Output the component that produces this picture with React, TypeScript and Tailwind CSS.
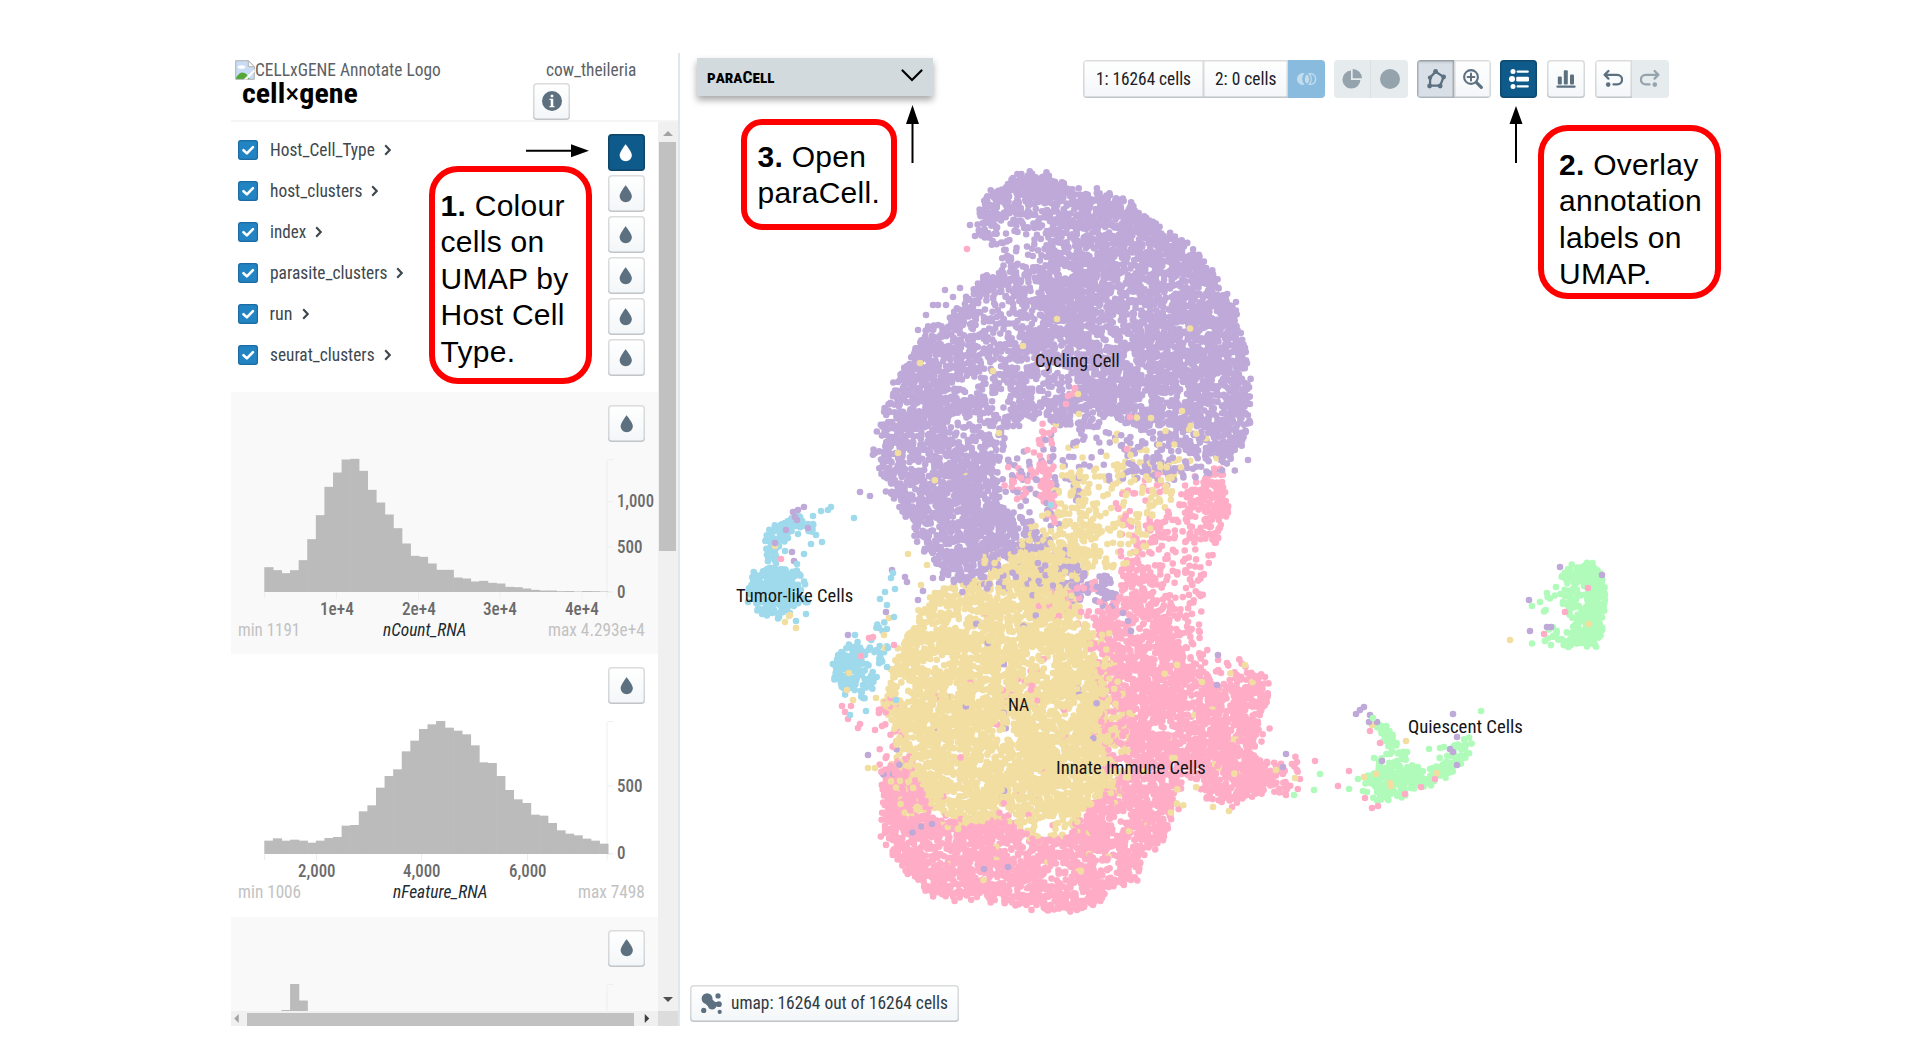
import React, { useLayoutEffect, useRef, useState } from "react";

/* ---------- condensed text ---------- */

type FitProps = { w: number; className?: string; children: React.ReactNode };

function Fit({ w, className = "", children }: FitProps) {
  const ref = useRef<HTMLSpanElement>(null);
  const [scale, setScale] = useState(0.89);
  useLayoutEffect(() => {
    if (ref.current) setScale(w / ref.current.offsetWidth);
  }, [w]);
  return (
    <span className={`block shrink-0 whitespace-nowrap leading-[20px] ${className}`} style={{ width: w }}>
      <span ref={ref} className="inline-block origin-left" style={{ transform: `scaleX(${scale})` }}>
        {children}
      </span>
    </span>
  );
}

/* ---------- icons ---------- */

const Drop = () => (
  <svg viewBox="0 0 16 16" className="size-[19.5px]" fill="currentColor">
    <path d="M7.88 1s-4.9 6.28-4.9 8.9c.01 2.82 2.34 5.1 4.99 5.1 2.65-.01 5.03-2.3 5.03-5.13C12.99 7.17 7.88 1 7.88 1z" />
  </svg>
);

const Info = () => (
  <svg viewBox="0 0 16 16" className="size-[20px]">
    <circle cx="8" cy="8" r="8" fill="#5c7080" />
    <path d="M7 3h2v2H7zM6 6.2h3V12h1v1H6v-1h1V7.2H6z" fill="#fff" />
  </svg>
);

const Venn = () => (
  <svg viewBox="0 0 20 14" className="h-[14px] w-[20px]">
    <path d="M7.5 1.2A6 6 0 1 0 7.5 12.8 8.6 8.6 0 0 1 7.5 1.2z" fill="currentColor" />
    <path d="M10 2.2a6.2 6.2 0 0 1 0 9.6 6.2 6.2 0 0 1 0-9.6z" fill="currentColor" />
    <path d="M12.3 1.7a5.4 5.4 0 1 1 0 10.6 8.6 8.6 0 0 0 0-10.6z" fill="none" stroke="currentColor" strokeWidth="1.4" />
  </svg>
);

const Pie = () => (
  <svg viewBox="0 0 20 20" className="size-[20px]" fill="currentColor">
    <path d="M9 1.6A9 9 0 1 0 18.4 11H9z" />
    <path d="M10.7 0v9.3H20A9.3 9.3 0 0 0 10.7 0z" />
  </svg>
);

const Polygon = () => (
  <svg viewBox="0 0 20 20" className="size-[20px]" stroke="currentColor" fill="currentColor">
    <path d="M9.6 2.6 17.6 8 14.2 16.6H4L4.2 8.4z" fill="none" strokeWidth="2.3" />
    <g stroke="none">
      <circle cx="9.6" cy="2.5" r="2.4" />
      <circle cx="17.6" cy="8" r="2.4" />
      <circle cx="14.2" cy="17" r="2.4" />
      <circle cx="3.6" cy="17" r="2.4" />
      <circle cx="4" cy="8.6" r="2.2" />
    </g>
  </svg>
);

const Zoom = () => (
  <svg viewBox="0 0 20 20" className="size-[20px]" fill="none" stroke="currentColor">
    <circle cx="8" cy="8" r="6.9" strokeWidth="2.1" />
    <path d="M8 4.6v6.8M4.6 8h6.8" strokeWidth="2" strokeLinecap="round" />
    <path d="M13.4 13.4 18.3 18.3" strokeWidth="3.2" strokeLinecap="round" />
  </svg>
);

const Labels = () => (
  <svg viewBox="0 0 20 20" className="size-[20px]" fill="currentColor">
    <circle cx="4" cy="2.6" r="2.5" />
    <circle cx="3" cy="10" r="3" />
    <circle cx="4" cy="17.4" r="2.5" />
    <rect x="7.6" y="1.4" width="12.2" height="2.4" rx="1" />
    <rect x="7.2" y="7.7" width="12.8" height="4.8" rx="1.2" />
    <rect x="7.6" y="16.2" width="12.2" height="2.4" rx="1" />
  </svg>
);

const Bars = () => (
  <svg viewBox="0 0 20 20" className="size-[20px]" fill="currentColor">
    <rect x="1.8" y="7.4" width="4" height="8" rx="1" />
    <rect x="7.8" y="1.2" width="4" height="14.2" rx="1" />
    <rect x="14" y="5.4" width="4" height="10" rx="1" />
    <rect x="0.4" y="16.4" width="19.2" height="2.4" rx="1" />
  </svg>
);

const Undo = () => (
  <svg viewBox="0 0 20 20" className="size-[20px]" fill="none" stroke="currentColor" strokeWidth="2.3" strokeLinecap="round" strokeLinejoin="round">
    <path d="M5.4 2 1.6 5.8l3.8 3.8M2 5.8h12.3a4.6 4.6 0 0 1 0 9.6h-3.8" />
    <circle cx="5.2" cy="15.6" r="2.3" fill="currentColor" stroke="none" />
  </svg>
);

const Cluster = () => (
  <svg viewBox="0 0 20 20" className="size-[21px]" fill="currentColor">
    <circle cx="5.8" cy="5.4" r="5.2" />
    <circle cx="10.6" cy="11.8" r="4" />
    <path d="M8.6 4.2 14 9v5l-5 1-5-5z" />
    <circle cx="17" cy="10.6" r="2.8" />
    <rect x="11" y="8.6" width="6" height="4" />
    <circle cx="16.2" cy="2.8" r="2.5" />
    <circle cx="2.6" cy="16.6" r="2.5" />
    <circle cx="17.8" cy="18" r="2" />
  </svg>
);

const BrokenImage = () => (
  <svg viewBox="0 0 20 20" className="size-[20px]">
    <path d="M.7.7h12.6l6 6v12.6H.7z" fill="#c9dcf5" stroke="#b0b0b0" />
    <path d="M13.3.7v6h6z" fill="#fff" stroke="#b0b0b0" />
    <ellipse cx="6.5" cy="7" rx="4" ry="1.8" fill="#fff" />
    <path d="M1.2 17.5C5 10.5 11 10.5 14.5 19H1.2z" fill="#53a839" />
    <path d="M8.5 19.6 19.6 9v2.8L12 19.6z" fill="#fff" />
  </svg>
);

/* ---------- buttons ---------- */

const FACE = "bg-gradient-to-b from-white to-[#f3f6f8] shadow-[inset_0_0_0_1.5px_rgba(16,22,26,0.15),inset_0_-1.5px_0_rgba(16,22,26,0.08)]";

function ColorButton({ active = false, children }: { active?: boolean; children?: React.ReactNode }) {
  return (
    <button
      className={`flex size-[37px] shrink-0 items-center justify-center rounded-[4px] ${
        active ? "bg-[#0e5a8a] text-white shadow-[inset_0_0_0_1.5px_rgba(16,22,26,0.3)]" : `${FACE} text-[#5c7080]`
      }`}
    >
      {children ?? <Drop />}
    </button>
  );
}

/* ---------- sidebar ---------- */

const CATEGORIES: [string, number][] = [
  ["Host_Cell_Type", 105],
  ["host_clusters", 92],
  ["index", 36],
  ["parasite_clusters", 117],
  ["run", 23],
  ["seurat_clusters", 105],
];

function CategoryRow({ name, w, active }: { name: string; w: number; active: boolean }) {
  return (
    <div className="flex h-[41.1px] items-start pl-[7px] pr-[13px]">
      <span className="mt-[6px] flex size-[20px] items-center justify-center rounded-[3px] bg-[#2384c3] shadow-[inset_0_0_0_1.2px_rgba(16,60,100,0.35)]">
        <svg viewBox="0 0 16 16" className="size-[18px]">
          <path d="M4 8.2 7 11l5.4-5.6" fill="none" stroke="#fff" strokeWidth="2.3" strokeLinecap="round" strokeLinejoin="round" />
        </svg>
      </span>
      <Fit w={w} className="ml-[11.5px] mt-[6px] text-[#3d474e]">{name}</Fit>
      <svg viewBox="0 0 7 12" className="ml-[9.5px] mt-[10px] h-[12px] w-[7px]">
        <path d="M1.2 1.3 5.7 6 1.2 10.7" fill="none" stroke="#3d474e" strokeWidth="2.1" />
      </svg>
      <span className="ml-auto">
        <ColorButton active={active} />
      </span>
    </div>
  );
}

type Tick = { at: number; label: string; w: number };
type HistProps = {
  name?: string;
  nameW?: number;
  nameX?: number;
  min?: string;
  minW?: number;
  max?: string;
  maxW?: number;
  bars: number[];
  xTicks?: Tick[];
  yTicks?: Tick[];
  shaded?: boolean;
};

function Histogram({ name, nameW = 0, nameX = 0, min, minW = 0, max, maxW = 0, bars, xTicks = [], yTicks = [], shaded }: HistProps) {
  return (
    <section className={`relative h-[262.3px] w-[427px] shrink-0 ${shaded ? "bg-[#f9f9f9]" : "bg-white"}`}>
      <div className="flex justify-end pr-[13px] pt-[13px]">
        <ColorButton />
      </div>
      <svg viewBox="0 0 427 262" className="absolute left-0 top-0 h-[262px] w-[427px]">
        <path d="M382 67.5h-4.5M376 67.5v139M376 200h6M33.5 200v6" stroke="#eeeeee" fill="none" />
        {yTicks.map((t) => (
          <path key={t.label} d={`M376 ${t.at}h6`} stroke="#eeeeee" />
        ))}
        {bars.map((h, i) => (
          <rect key={i} x={33.3 + i * 8.59} y={200 - h} width={9.2} height={h} fill="#bbbbbb" />
        ))}
        {xTicks.map((t) => (
          <path key={t.label} d={`M${t.at} 200v7`} stroke="#eeeeee" />
        ))}
      </svg>
      {xTicks.map((t) => (
        <div key={t.label} className="absolute top-[207px] font-medium text-[#6b6b6b]" style={{ left: t.at - t.w / 2 }}>
          <Fit w={t.w}>{t.label}</Fit>
        </div>
      ))}
      {yTicks.map((t) => (
        <div key={t.label} className="absolute left-[386px] font-medium text-[#6b6b6b]" style={{ top: t.at - 10.5 }}>
          <Fit w={t.w}>{t.label}</Fit>
        </div>
      ))}
      {name && (
        <div className="absolute left-[7px] right-[13px] top-[227.8px] flex justify-between">
          <Fit w={minW} className="text-[#c2c2c2]">{min}</Fit>
          <Fit w={maxW} className="text-[#c2c2c2]">{max}</Fit>
        </div>
      )}
      {name && (
        <div className="absolute top-[227.8px] italic text-[#202b33]" style={{ left: nameX }}>
          <Fit w={nameW}>{name}</Fit>
        </div>
      )}
    </section>
  );
}

const COUNT_BARS = [
  532, 541, 550, 541, 511, 448, 376, 291, 248, 209, 207, 243, 300, 338, 374, 415, 461, 498, 501, 521, 540, 540, 563, 566, 575, 573,
  579, 581, 591, 592, 596, 600, 602, 602, 604, 603.5, 605, 603.5, 604, 605,
].map((t) => (606.5 - t) / 3);

const FEATURE_BARS = [
  423, 416, 423, 420, 423, 429, 423, 415, 412, 378, 376, 335, 317, 264, 229, 209, 155, 123, 88, 74, 64, 84, 93, 104, 137, 188, 190,
  229, 271, 299, 310, 345, 348, 370, 392, 402, 407, 417, 423, 432,
].map((t) => (463 - t) / 3);

const THIRD_BARS = [0, 80, 107, 133, 116.5];

function Sidebar() {
  return (
    <aside className="flex h-[973px] w-[449px] shrink-0 flex-col border-r-2 border-[#dfe6ee]">
      <header className="flex h-[68.5px] shrink-0 justify-between border-b-2 border-[#f5f5f5] pl-[4px] pr-[42px]">
        <div className="pt-[7px]">
          <div className="flex h-[19px]">
            <BrokenImage />
            <Fit w={185.5} className="text-[#5c6166]">CELLxGENE Annotate Logo</Fit>
          </div>
          <Fit w={115.5} className="ml-[6.5px] text-[27.5px] font-bold leading-[29px] text-black">
            cell<span className="font-normal">×</span>gene
          </Fit>
        </div>
        <div className="flex w-[103px] flex-col pt-[7px]">
          <Fit w={90.5} className="ml-[12.500px] text-[#5c6166]">cow_theileria</Fit>
          <span className="mt-[2.5px]">
            <ColorButton>
              <Info />
            </ColorButton>
          </span>
        </div>
      </header>
      <div className="flex h-[889.5px] shrink-0">
        <div className="flex w-[426.5px] flex-col overflow-hidden">
          <div className="h-[270.5px] shrink-0 pt-[12.5px]">
            {CATEGORIES.map(([name, w], i) => (
              <CategoryRow key={name} name={name} w={w} active={i === 0} />
            ))}
          </div>
          <Histogram
            shaded
            name="nCount_RNA"
            nameW={84}
            nameX={152}
            min="min 1191"
            minW={62}
            max="max 4.293e+4"
            maxW={97}
            bars={COUNT_BARS}
            xTicks={[
              { at: 105.5, label: "1e+4", w: 33.5 },
              { at: 187.5, label: "2e+4", w: 33.5 },
              { at: 269, label: "3e+4", w: 33.5 },
              { at: 351, label: "4e+4", w: 33.5 },
            ]}
            yTicks={[
              { at: 109.7, label: "1,000", w: 37 },
              { at: 155, label: "500", w: 25.5 },
              { at: 200, label: "0", w: 8.5 },
            ]}
          />
          <Histogram
            name="nFeature_RNA"
            nameW={95}
            nameX={161.5}
            min="min 1006"
            minW={63}
            max="max 7498"
            maxW={67}
            bars={FEATURE_BARS}
            xTicks={[
              { at: 85.5, label: "2,000", w: 37.5 },
              { at: 190.5, label: "4,000", w: 37.5 },
              { at: 296.5, label: "6,000", w: 37.5 },
            ]}
            yTicks={[
              { at: 132, label: "500", w: 25.5 },
              { at: 199.5, label: "0", w: 8.5 },
            ]}
          />
          <Histogram shaded bars={THIRD_BARS} />
        </div>
        <div className="flex w-[20px] grow flex-col items-center bg-[#f0f0f0]">
          <svg viewBox="0 0 10 5" className="mt-[9.5px] h-[5px] w-[10px]">
            <path d="M0 5 5 0l5 5z" fill="#a3a3a3" />
          </svg>
          <div className="mt-[6px] h-[409px] w-[17px] bg-[#c1c1c1]" />
          <svg viewBox="0 0 10 5" className="mb-[9px] mt-auto h-[5px] w-[10px]">
            <path d="M0 0 5 5l5-5z" fill="#505050" />
          </svg>
        </div>
      </div>
      <div className="flex h-[15px] shrink-0 items-center bg-[#f0f0f0]">
        <svg viewBox="0 0 5 10" className="ml-[3px] h-[9px] w-[5px]">
          <path d="M5 0 0 5l5 5z" fill="#a3a3a3" />
        </svg>
        <div className="ml-[7.5px] mt-[2px] h-[13px] w-[387px] bg-[#c1c1c1]" />
        <svg viewBox="0 0 5 10" className="ml-[10.5px] h-[9px] w-[6px]">
          <path d="M0 0l5 5-5 5z" fill="#404040" />
        </svg>
        <div className="ml-auto h-full w-[20px] bg-[#dcdcdc]" />
      </div>
    </aside>
  );
}

/* ---------- embedding ---------- */

const P = "#bea9d9";
const K = "#ffadc7";
const Y = "#f2dea1";
const B = "#9fdaec";
const G = "#b0fbba";

let seed = 20731;
const rnd = () => {
  seed = (seed + 0x6d2b79f5) | 0;
  let t = Math.imul(seed ^ (seed >>> 15), 1 | seed);
  t = (t + Math.imul(t ^ (t >>> 7), 61 | t)) ^ t;
  return ((t ^ (t >>> 14)) >>> 0) / 4294967296;
};

/* smooth value noise, used to make the dense areas clumpy */
const lattice = (i: number, j: number) => {
  const s = Math.sin(i * 127.1 + j * 311.7) * 43758.5453;
  return s - Math.floor(s);
};
function noise(x: number, y: number) {
  const i = Math.floor(x), j = Math.floor(y);
  const u = x - i, v = y - j;
  const a = lattice(i, j) * (1 - u) + lattice(i + 1, j) * u;
  const b = lattice(i, j + 1) * (1 - u) + lattice(i + 1, j + 1) * u;
  return a * (1 - v) + b * v;
}

function inside(x: number, y: number, poly: number[]) {
  let hit = false;
  const n = poly.length / 2;
  for (let i = 0, j = n - 1; i < n; j = i++) {
    const xi = poly[i * 2], yi = poly[i * 2 + 1], xj = poly[j * 2], yj = poly[j * 2 + 1];
    if (yi > y !== yj > y && x < ((xj - xi) * (y - yi)) / (yj - yi) + xi) hit = !hit;
  }
  return hit;
}

/* [cx, cy, rx, ry, share of points kept] */
const PURPLE_THIN = [
  [1018, 243, 42, 30, 0.22], [1040, 212, 34, 9, 0.45], [1000, 320, 32, 36, 0.28], [998, 362, 20, 32, 0.3],
  [1001, 401, 15, 15, 0.01], [968, 386, 13, 14, 0.1], [951, 398, 7, 9, 0.1], [962, 425, 11, 16, 0.12],
  [1030, 295, 11, 44, 0.4], [1050, 385, 30, 24, 0.35], [1105, 330, 18, 22, 0.4], [1125, 312, 14, 22, 0.45],
  [890, 405, 17, 18, 0.28], [990, 430, 30, 28, 0.35], [1080, 425, 54, 22, 0.4], [1062, 345, 16, 12, 0.4],
  [1140, 440, 95, 22, 0.45], [960, 340, 30, 30, 0.6], [1000, 480, 16, 26, 0.55], [1190, 405, 40, 10, 0.5],
  [1020, 560, 30, 14, 0.5],
];
const YELLOW_THIN = [
  [935, 665, 16, 10, 0.08], [955, 687, 12, 10, 0.2], [1040, 665, 30, 12, 0.4], [960, 620, 55, 14, 0.45], [1035, 690, 14, 9, 0.25],
  [1005, 735, 16, 6, 0.2], [1060, 820, 6, 16, 0.05], [1010, 812, 24, 9, 0.4], [1072, 620, 16, 32, 0.5],
  [905, 690, 12, 16, 0.3], [990, 755, 12, 6, 0.3], [1112, 725, 12, 60, 0.5], [1068, 710, 10, 10, 0.3],
];
const PINK_THIN = [
  [1192, 697, 9, 9, 0.03], [1058, 878, 18, 20, 0.3], [1100, 862, 18, 16, 0.4], [1160, 725, 14, 9, 0.3],
  [979, 898, 6, 5, 0.05], [1020, 850, 24, 12, 0.5], [1120, 830, 14, 22, 0.5], [1190, 780, 12, 16, 0.2],
  [1190, 720, 12, 14, 0.4], [940, 855, 16, 14, 0.5],
];

type Region = { c: string; d: number; poly: number[]; thin?: number[][] };

const REGIONS: Region[] = [
  {
    c: P, d: 0.112, thin: PURPLE_THIN,
    poly: [1022,170,1047,175,1060,184,1090,190,1121,199,1142,214,1158,227,1186,243,1212,272,1228,298,1241,324,1245,363,1249,383,1250,426,1238,450,1226,458,1193,450,1160,437,1133,425,1110,420,1083,438,1047,417,1023,420,1003,440,997,467,997,507,1027,520,1050,540,1017,553,990,570,970,587,957,582,935,562,917,539,907,515,895,501,884,477,874,453,881,427,888,403,900,380,914,350,920,334,945,322,964,302,984,279,1003,267,998,252,984,239,975,233,979,213,985,197,1008,187],
  },
  { c: P, d: 0.011, poly: [997,440,1083,430,1240,440,1235,475,1160,490,1090,480,1060,530,1000,520] },
  { c: P, d: 0.02, poly: [1120,440,1235,445,1230,470,1130,480] },
  { c: P, d: 0.05, poly: [1060,560,1085,570,1110,575,1118,600,1112,608,1090,603,1070,590] },
  { c: P, d: 0.014, poly: [1000,545,1060,540,1085,570,1080,600,1040,600,1000,590,960,595] },
  { c: P, d: 0.012, poly: [935,560,960,560,975,590,955,590] },
  {
    c: K, d: 0.108, thin: PINK_THIN,
    poly: [882,815,883,783,903,763,920,780,933,817,973,823,1010,817,1033,840,1073,833,1087,807,1113,783,1133,763,1123,717,1110,683,1120,650,1150,613,1173,627,1177,647,1203,670,1223,690,1237,672,1257,675,1267,687,1268,710,1255,727,1252,750,1270,772,1268,785,1237,803,1210,801,1197,783,1182,773,1175,803,1173,817,1163,837,1144,857,1136,880,1107,891,1092,905,1066,911,1043,911,1022,905,1003,901,960,899,933,896,908,873,894,853,885,833],
  },
  { c: K, d: 0.055, poly: [1115,600,1120,585,1150,613,1115,660,1103,640,1093,610] },
  { c: K, d: 0.04, poly: [1085,640,1115,600,1120,660,1125,760,1105,780,1100,690] },
  { c: K, d: 0.026, poly: [1125,565,1143,530,1170,510,1193,480,1222,470,1230,510,1216,550,1203,580,1201,640,1212,670,1170,640,1140,610,1118,600] },
  { c: K, d: 0.036, poly: [1190,475,1225,470,1228,505,1218,540,1200,535,1205,505,1185,505] },
  { c: K, d: 0.035, poly: [1120,570,1150,560,1160,620,1125,620] },
  { c: K, d: 0.022, poly: [1034,425,1050,425,1052,450,1055,500,1052,525,1042,510,1036,470] },
  { c: K, d: 0.04, poly: [1040,465,1052,465,1055,520,1040,510] },
  { c: K, d: 0.01, poly: [1000,465,1040,440,1045,500,1010,500] },
  { c: K, d: 0.012, poly: [1110,500,1170,460,1170,530,1120,580] },
  { c: K, d: 0.014, poly: [1048,580,1100,580,1100,630,1055,620] },
  { c: K, d: 0.03, poly: [880,770,900,740,920,780,935,820,882,815] },
  { c: K, d: 0.014, poly: [878,705,902,690,905,770,880,775] },
  { c: K, d: 0.05, poly: [1245,755,1278,765,1272,790,1240,800] },
  { c: K, d: 0.018, poly: [1270,760,1298,755,1298,793,1262,795] },
  { c: K, d: 0.01, poly: [1195,660,1235,655,1270,680,1275,735,1240,760] },
  { c: K, d: 0.0006, poly: [900,640,1080,580,1110,780,1080,830,930,820] },
  { c: K, d: 0.009, poly: [1010,670,1045,670,1040,705,1010,700] },
  {
    c: Y, d: 0.112, thin: YELLOW_THIN,
    poly: [940,589,987,579,1010,559,1050,545,1083,547,1087,570,1073,582,1080,597,1077,617,1098,635,1088,653,1105,677,1121,700,1121,730,1107,753,1108,787,1093,800,1073,815,1033,822,1010,815,973,822,935,810,920,783,898,757,894,723,884,703,892,670,905,637,925,605],
  },
  { c: Y, d: 0.03, poly: [973,815,1033,820,1093,800,1073,834,1033,840,1010,820,960,830,935,825] },
  { c: Y, d: 0.018, poly: [1060,475,1110,458,1180,465,1178,490,1150,510,1150,560,1100,570,1050,550,1030,525,1050,500] },
  { c: Y, d: 0.022, poly: [1075,470,1098,468,1100,560,1060,555,1055,510] },
  { c: Y, d: 0.014, poly: [1145,475,1178,470,1175,500,1150,515] },
  { c: Y, d: 0.018, poly: [1080,640,1110,630,1128,700,1140,750,1130,790,1090,810,1105,760] },
  { c: Y, d: 0.016, poly: [885,770,915,750,930,825,900,815] },
  { c: Y, d: 0.016, poly: [980,555,1040,530,1050,550,985,580] },
  { c: Y, d: 0.0014, poly: [1130,650,1260,680,1270,780,1190,800,1090,890,960,880,900,830,1100,810] },
  { c: Y, d: 0.00015, poly: [900,360,980,290,1240,330,1240,440,1000,440,960,540,900,470] },
  { c: Y, d: 0.004, poly: [1060,440,1200,420,1220,460,1060,470] },
  { c: P, d: 0.0005, poly: [900,680,1060,560,1110,700,1060,830,900,830] },
  { c: P, d: 0.004, poly: [878,740,905,730,910,800,880,780] },
  { c: B, d: 0.11, poly: [752,583,757,572,778,563,793,573,797,600,793,607,782,618,757,611] },
  { c: B, d: 0.03, poly: [748,575,790,565,808,578,806,605,795,607,750,612] },
  { c: B, d: 0.15, poly: [767,562,768,533,783,518,797,515,813,528,817,535,797,526,789,530,780,544,774,562] },
  { c: B, d: 0.13, poly: [834,682,836,660,853,643,861,646,864,663,858,688,847,694] },
  { c: B, d: 0.022, poly: [864,630,880,617,890,628,888,650,866,700,860,690] },
  { c: B, d: 0.03, poly: [862,670,878,680,876,695,860,692] },
  { c: G, d: 0.14, poly: [1567,565,1596,565,1606,587,1606,603,1601,634,1593,645,1563,645,1573,633,1580,609,1590,600,1586,583,1566,579] },
  { c: G, d: 0.04, poly: [1562,570,1590,585,1585,610,1572,635,1568,600] },
  { c: G, d: 0.012, poly: [1540,592,1572,590,1578,630,1545,640] },
  { c: G, d: 0.05, poly: [1531,643,1560,631,1570,645,1540,645] },
  { c: G, d: 0.11, poly: [1377,801,1370,780,1385,765,1407,765,1427,769,1447,757,1460,739,1471,733,1470,752,1449,774,1427,786,1393,798] },
  { c: G, d: 0.02, poly: [1363,780,1385,750,1412,755,1385,805] },
  { c: G, d: 0.17, poly: [1375,722,1383,725,1398,742,1393,745,1381,738] },
  { c: G, d: 0.02, poly: [1390,745,1410,745,1405,765,1375,765] },
];

const SINGLES: [string, number[]][] = [
  [K, [967,249, 781,559, 1130,417, 1127,449, 1054,430, 873,637, 861,656, 869,638, 894,645, 842,706, 845,712, 851,706, 848,719, 860,724, 858,728, 875,730, 1565,612, 1544,634, 1588,588, 1370,731, 1380,743, 1349,771, 1338,786, 1365,798, 1372,808, 1378,806, 1435,779, 1421,787, 1405,794, 1315,761, 1297,762, 1300,779, 1286,795, 1287,789, 1227,663, 1072,394, 1075,388, 1066,404, 1068,396]],
  [Y, [1057,319, 1023,346, 920,363, 993,371, 1078,394, 1079,414, 1151,418, 1182,411, 898,453, 999,433, 1245,665, 789,616, 785,622, 796,628, 790,615, 775,546, 908,554, 927,565, 921,585, 889,618, 884,635, 885,648, 849,673, 847,690, 853,700, 876,698, 1510,640, 1589,624, 1372,725, 1406,741, 1364,777, 1376,774, 1390,783, 1391,786, 1437,773, 1295,778, 1276,770, 868,768, 875,768, 1213,807, 1229,811]],
  [P, [860,492, 870,496, 793,512, 798,510, 804,507, 795,517, 797,520, 808,528, 786,530, 792,552, 794,561, 775,543, 892,570, 905,577, 907,582, 923,591, 918,600, 933,578, 942,578, 886,612, 848,635, 945,290, 926,331, 933,305, 938,305, 946,305, 1236,302, 1248,460, 1560,567, 1602,575, 1529,600, 1530,631, 1547,627, 1551,627, 1356,714, 1360,710, 1364,707, 1370,715, 1369,722, 1377,722, 1453,714, 1382,761, 1450,749, 1453,752, 1457,765, 1457,737, 1286,754, 1283,767, 1218,655, 1217,685, 868,755, 1008,867, 984,869, 932,824, 1123,613, 1128,621, 1131,631, 970,225, 975,236, 953,297, 960,288, 918,330, 926,315, 1013,178, 1008,184, 898,382]],
  [B, [821,511, 828,510, 831,507, 854,518, 813,516, 813,524, 798,534, 788,538, 811,544, 822,542, 816,535, 804,554, 785,551, 797,564, 800,575, 806,614, 796,621, 893,573, 891,578, 895,589, 885,592, 880,599, 887,605, 894,617, 881,659, 887,667, 896,700, 1051,505, 850,715, 866,711, 863,698, 855,635, 888,648]],
  [G, [1481,711, 1373,718, 1320,774, 1314,790, 1294,795, 1349,789, 1358,779, 1363,791, 1367,792, 1374,758, 1429,749, 1440,748, 1444,747, 1407,752, 1556,587, 1547,593, 1540,602, 1532,606, 1563,604]],
];

const ROUNDS = 10;

function buildDots() {
  const layers: { c: string; d: string[] }[] = [];
  const colours = [P, K, Y, B, G];
  for (let r = 0; r < ROUNDS; r++) colours.forEach((c) => layers.push({ c, d: [] }));
  for (const { c, d, poly, thin } of REGIONS) {
    const xs = poly.filter((_, i) => i % 2 === 0);
    const ys = poly.filter((_, i) => i % 2 === 1);
    const x0 = Math.min(...xs), x1 = Math.max(...xs), y0 = Math.min(...ys), y1 = Math.max(...ys);
    const n = Math.round((x1 - x0) * (y1 - y0) * d);
    for (let i = 0; i < n; i++) {
      const x = x0 + rnd() * (x1 - x0);
      const y = y0 + rnd() * (y1 - y0);
      if (!inside(x, y, poly)) continue;
      let keep = thin ? 0.45 + 0.75 * noise(x / 11, y / 11) : 1;
      for (const [cx, cy, rx, ry, k] of thin ?? []) {
        const q = ((x - cx) / rx) ** 2 + ((y - cy) / ry) ** 2;
        if (q < 1) keep = Math.min(keep, k + (1 - k) * q * q * q);
      }
      if (rnd() > keep) continue;
      const spread = thin ? 5.5 : 4;
      const jx = x + (rnd() + rnd() - 1) * spread;
      const jy = y + (rnd() + rnd() - 1) * spread;
      const sparse = d < 0.06 ? Math.floor(ROUNDS / 2) : 0;
      const round = sparse + Math.floor(rnd() * (ROUNDS - sparse));
      layers[round * 5 + colours.indexOf(c)].d.push(`M${jx.toFixed(1)} ${jy.toFixed(1)}h0`);
    }
  }
  for (const [c, pts] of SINGLES) {
    const out: string[] = [];
    for (let i = 0; i < pts.length; i += 2) out.push(`M${pts[i]} ${pts[i + 1]}h0`);
    layers.push({ c, d: out });
  }
  return layers.map((l) => ({ c: l.c, d: l.d.join("") }));
}

const DOTS = buildDots();

const LABELS: [string, number, number, number][] = [
  ["Cycling Cell", 355, 351, 85],
  ["Tumor-like Cells", 55.5, 586, 117.5],
  ["NA", 327.5, 694.5, 21.5],
  ["Innate Immune Cells", 375.5, 758, 149.5],
  ["Quiescent Cells", 728, 717, 114.5],
];

function Embedding() {
  return (
    <div className="absolute inset-0">
      <svg viewBox="680 0 1238 1042" className="h-[1042px] w-[1238px]" fill="none" strokeWidth="6.6" strokeLinecap="round">
        {DOTS.map((l, i) => (
          <path key={i} d={l.d} stroke={l.c} />
        ))}
      </svg>
      {LABELS.map(([text, x, y, w]) => (
        <div key={text} className="absolute text-[#151515]" style={{ left: x, top: y }}>
          <Fit w={w}>{text}</Fit>
        </div>
      ))}
    </div>
  );
}

/* ---------- toolbar ---------- */

const CELL = "flex h-full items-center justify-center";
const OFF = "bg-[#e6ebee] text-[#95a3ad]";

function Toolbar() {
  return (
    <div className="flex h-[37.5px] gap-[10px] text-[#5c7080]">
      <div className="flex w-[242px] overflow-hidden rounded-[4px]">
        <div className={`${CELL} w-[121px] ${FACE} text-[#182026]`}>
          <Fit w={95}>1: 16264 cells</Fit>
        </div>
        <div className={`${CELL} -ml-px w-[85px] ${FACE} text-[#182026]`}>
          <Fit w={61}>2: 0 cells</Fit>
        </div>
        <div className={`${CELL} w-[37px] bg-[#88bbdd] text-[#c3dcee]`}>
          <Venn />
        </div>
      </div>
      <div className={`-ml-[1px] flex w-[74px] overflow-hidden rounded-[4px] ${OFF}`}>
        <div className={`${CELL} w-[37px] border-r border-[#d9e1e5]`}>
          <Pie />
        </div>
        <div className={`${CELL} w-[37px]`}>
          <span className="size-[20px] rounded-full bg-[#95a3ad]" />
        </div>
      </div>
      <div className="-ml-px flex w-[74px] overflow-hidden rounded-[4px]">
        <div className={`${CELL} w-[37px] bg-[#d8dfe7] shadow-[inset_0_0_0_1.5px_rgba(16,22,26,0.2),inset_0_2px_3px_rgba(16,22,26,0.15)]`}>
          <Polygon />
        </div>
        <div className={`${CELL} w-[37px] ${FACE}`}>
          <Zoom />
        </div>
      </div>
      <div className={`${CELL} -ml-px w-[37px] rounded-[4px] bg-[#0e5a8a] text-white shadow-[inset_0_0_0_1.5px_rgba(16,22,26,0.25)]`}>
        <Labels />
      </div>
      <div className={`${CELL} w-[37.5px] rounded-[4px] ${FACE}`}>
        <Bars />
      </div>
      <div className="flex w-[74px] overflow-hidden rounded-[4px]">
        <div className={`${CELL} w-[37px] ${FACE}`}>
          <Undo />
        </div>
        <div className={`${CELL} w-[37px] -scale-x-100 ${OFF}`}>
          <Undo />
        </div>
      </div>
    </div>
  );
}

/* ---------- annotations ---------- */

function Callout({ n, lines, className }: { n: number; lines: string[]; className: string }) {
  return (
    <div className={`absolute border-[6px] border-[#ff0000] font-['Liberation_Sans',Arial,sans-serif] text-[30px] leading-[36.4px] tracking-[0.28px] text-black ${className}`}>
      {lines.map((line, i) => (
        <div key={line} className="whitespace-nowrap">
          {i === 0 && <b>{n}. </b>}
          {line}
        </div>
      ))}
    </div>
  );
}

export default function App() {
  return (
    <div className="relative flex h-[1042px] w-[1918px] overflow-hidden bg-white pl-[231px] font-['Roboto_Condensed',Roboto,sans-serif] text-[18px] [font-stretch:75%]">
      <div className="pt-[53px]">
        <Sidebar />
      </div>
      <main className="relative flex w-[1238px] flex-col">
        <Embedding />
        <div className="relative flex pl-[17px] pr-[247px] pt-[58px]">
          <div className="flex h-[37.5px] w-[236px] items-center justify-between bg-[#d3dade] pl-[10px] pr-[10px] shadow-[0_4px_7px_rgba(0,0,0,0.35)]">
            <Fit w={67} className="text-[17px] font-bold text-black [font-variant:small-caps]">paraCell</Fit>
            <svg viewBox="0 0 22 13" className="mb-[2px] h-[13px] w-[22px]">
              <path d="M1.5 1.5 11 11l9.500-9.500" fill="none" stroke="#000" strokeWidth="2.2" strokeLinecap="round" />
            </svg>
          </div>
          <div className="ml-[150px] pt-[2px]">
            <Toolbar />
          </div>
        </div>
        <div className={`relative mb-[20.5px] ml-[10px] mt-auto flex h-[37px] w-[269px] items-center rounded-[4px] pl-[11px] ${FACE}`}>
          <span className="text-[#5c7080]">
            <Cluster />
          </span>
          <Fit w={216.500} className="ml-[9px] text-[#30393f]">umap: 16264 out of 16264 cells</Fit>
        </div>
      </main>

      <Callout n={1} lines={["Colour", "cells on", "UMAP by", "Host Cell", "Type."]} className="left-[429px] top-[166px] h-[218px] w-[163px] rounded-[29px] bg-white pl-[5.5px] pt-[16px]" />
      <Callout n={3} lines={["Open", "paraCell."]} className="left-[740.500px] top-[119px] h-[110.500px] w-[156px] rounded-[21px] pl-[11px] pt-[14px]" />
      <Callout n={2} lines={["Overlay", "annotation", "labels on", "UMAP."]} className="left-[1538px] top-[125px] h-[174px] w-[183px] rounded-[30px] pl-[15px] pt-[16px]" />

      <svg viewBox="0 0 1918 200" className="pointer-events-none absolute left-0 top-0 h-[200px] w-[1918px]">
        <path d="M526 150.700H572M912.500 163V122M1516 163V122" stroke="#000" strokeWidth="2" />
        <path d="M589 150.700 571 144.200v13zM912.500 105 906 124h13zM1516 106 1509.500 124h13z" />
      </svg>
    </div>
  );
}
